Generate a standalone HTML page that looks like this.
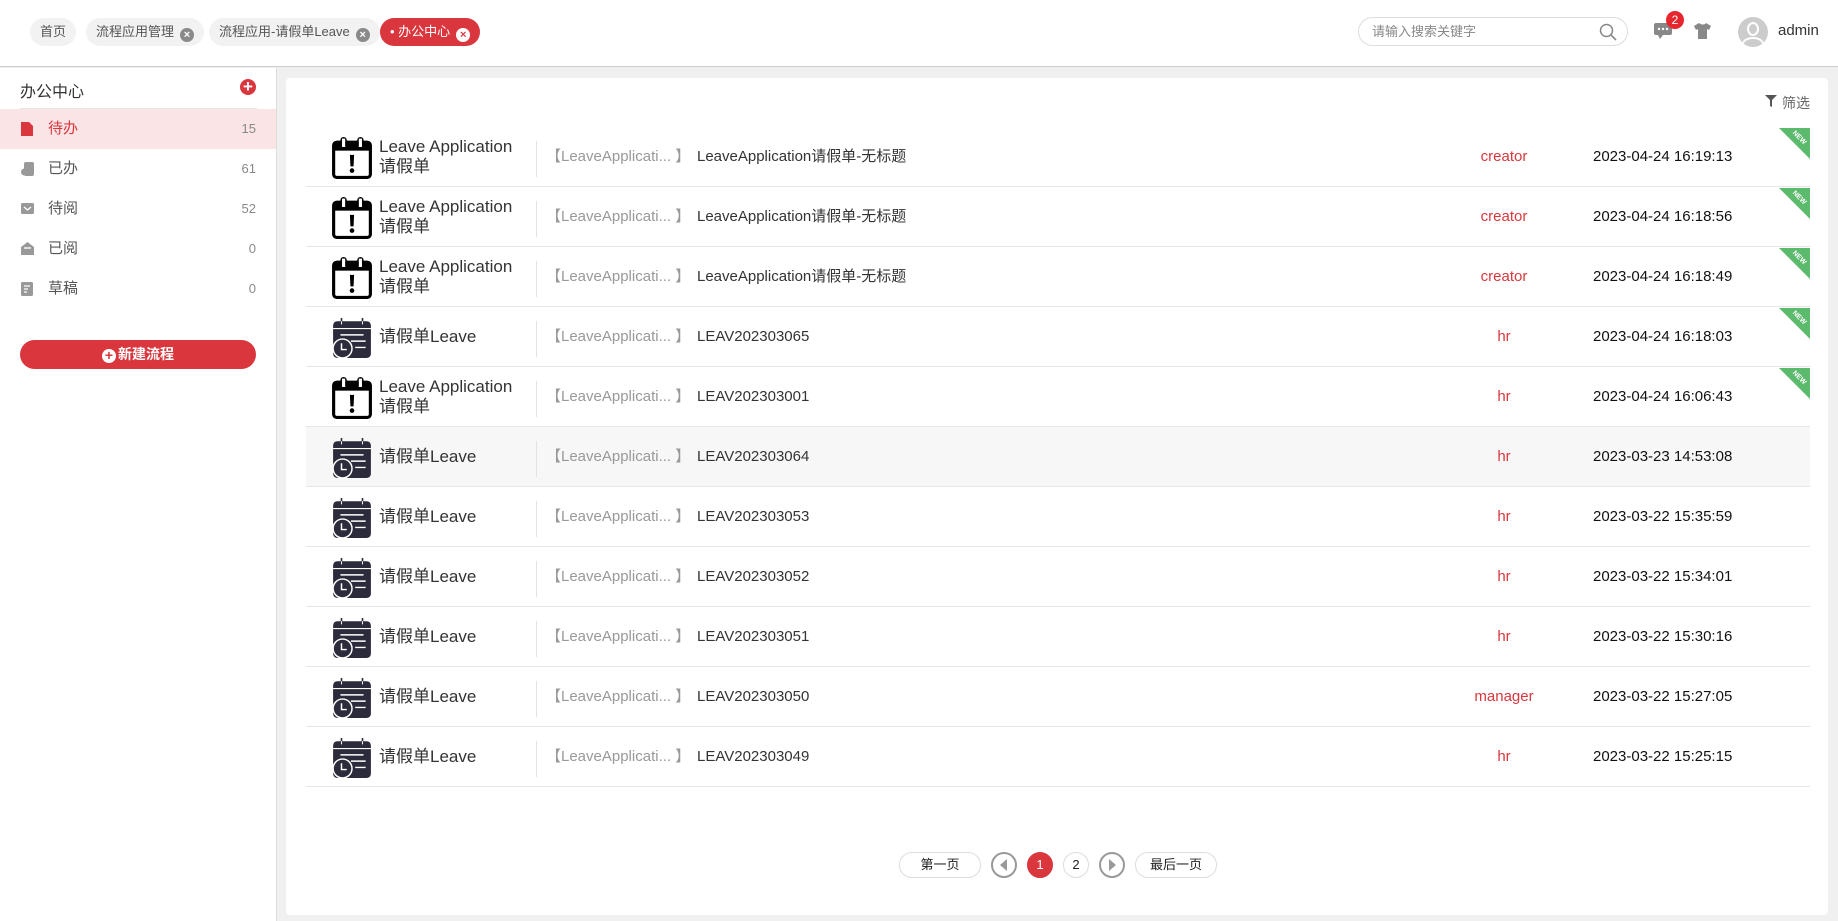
<!DOCTYPE html>
<html><head><meta charset="utf-8"><style>
*{margin:0;padding:0;box-sizing:border-box}
body{width:1838px;height:921px;background:#f0f0f0;font-family:"Liberation Sans","Noto Sans CJK SC",sans-serif;position:relative;overflow:hidden;color:#333}
.a{position:absolute}
#hdr{left:0;top:0;width:1838px;height:67px;background:#fff;border-bottom:1px solid #ccc}
.tab{position:absolute;top:18px;height:28px;border-radius:14px;background:#f2f2f2;font-size:13px;color:#555;line-height:28px;padding:0 10px;white-space:nowrap}
.x{display:inline-block;width:14px;height:14px;border-radius:50%;background:#8a8a8a;color:#fff;font-size:11px;line-height:14px;text-align:center;vertical-align:-2px;margin-left:6px;font-weight:bold}
#side{left:0;top:68px;width:277px;height:853px;background:#fff;border-right:1px solid #ddd}
.it{position:absolute;left:0;width:276px;height:40px;font-size:15px;color:#555;line-height:40px}
.it .t{position:absolute;left:48px}
.it .n{position:absolute;right:20px;font-size:13px;color:#888}
.it svg{position:absolute;left:21px;top:13px}
#card{left:286px;top:78px;width:1542px;height:837px;background:#fff;border-radius:4px}
.row{position:absolute;left:306px;width:1504px;height:60px;border-bottom:1px solid #e6e6e6}
.ic{position:absolute;left:26px;top:10px}
.nm{position:absolute;left:73px;font-size:17px;color:#333;line-height:20px;white-space:nowrap}
.dv{position:absolute;left:230px;top:14px;width:1px;height:36px;background:#e3e3e3}
.br{position:absolute;left:240px;top:20px;font-size:15px;color:#999;line-height:20px;white-space:nowrap}
.ti{position:absolute;left:391px;top:20px;font-size:15px;color:#333;line-height:20px;white-space:nowrap}
.ro{position:absolute;left:1150px;width:96px;text-align:center;top:20px;font-size:15px;color:#d9373d;line-height:20px}
.dt{position:absolute;left:1287px;top:20px;font-size:15px;color:#111;line-height:20px}
.new{position:absolute;right:0;top:1px;width:31px;height:31px}
.pb{position:absolute;top:852px;height:26px;border:1px solid #ddd;border-radius:13px;background:#fff;font-size:13px;line-height:24px;text-align:center;color:#222}
</style></head><body>
<div id="hdr" class="a">
<div class="tab" style="left:30px">首页</div>
<div class="tab" style="left:86px">流程应用管理<span class="x">×</span></div>
<div class="tab" style="left:209px">流程应用-请假单Leave<span class="x">×</span></div>
<div class="tab" style="left:380px;background:#d9373d;color:#fff">• 办公中心<span class="x" style="background:#fff;color:#d9373d">×</span></div>
<div class="a" style="left:1358px;top:17px;width:270px;height:29px;border:1px solid #ddd;border-radius:15px;font-size:13px;color:#888;line-height:27px;padding-left:13px">请输入搜索关键字
<svg class="a" style="right:10px;top:5px" width="18" height="18" viewBox="0 0 18 18"><circle cx="7.5" cy="7.5" r="6" fill="none" stroke="#888" stroke-width="1.5"/><path d="M12 12l5 5" stroke="#888" stroke-width="1.6"/></svg></div>
<svg class="a" style="left:1654px;top:23px" width="18" height="16" viewBox="0 0 18 16"><rect x="0" y="0" width="18" height="12" rx="2" fill="#888"/><path d="M4 12l2 4 3-4z" fill="#888"/><circle cx="5" cy="6" r="1.2" fill="#fff"/><circle cx="9" cy="6" r="1.2" fill="#fff"/><circle cx="13" cy="6" r="1.2" fill="#fff"/></svg>
<div class="a" style="left:1666px;top:11px;width:18px;height:18px;border-radius:50%;background:#e8262e;color:#fff;font-size:12px;line-height:18px;text-align:center">2</div>
<svg class="a" style="left:1694px;top:23px" width="17" height="16" viewBox="0 0 17 16"><path d="M5 0L0 3l2 4 2-1v10h9V6l2 1 2-4-5-3c-1 2-5 2-7 0z" fill="#888"/></svg>
<div class="a" style="left:1738px;top:17px;width:30px;height:30px;border-radius:50%;background:#ccc;overflow:hidden"><div class="a" style="left:9px;top:5px;width:12px;height:14px;border-radius:50%;border:2px solid #fff"></div><div class="a" style="left:4px;top:20px;width:22px;height:14px;border-radius:50%;border:2px solid #fff"></div></div>
<div class="a" style="left:1778px;top:22px;font-size:15px;color:#333">admin</div>
</div>
<div id="side" class="a">
<div class="a" style="left:20px;top:10px;font-size:16px;color:#333">办公中心</div>
<div class="a" style="left:240px;top:11px;width:16px;height:16px;border-radius:50%;background:#d9373d;color:#fff;font-size:17px;line-height:15px;text-align:center;font-weight:bold">+</div>
<div class="a" style="left:20px;top:40px;width:237px;height:1px;background:#e5e5e5"></div>
<div class="it" style="top:41px;background:#fae4e5;color:#d9373d"><svg width="12" height="14"><path d="M0 0h8l4 4v10H0z" fill="#d9373d"/></svg><span class="t">待办</span><span class="n">15</span></div>
<div class="it" style="top:81px"><svg width="13" height="14"><rect x="3" y="0" width="10" height="14" rx="2" fill="#999"/><circle cx="3.5" cy="10" r="3.5" fill="#999"/></svg><span class="t">已办</span><span class="n">61</span></div>
<div class="it" style="top:121px"><svg width="13" height="12" style="top:14px"><rect width="13" height="11" rx="1.5" fill="#999"/><path d="M3 4l3.5 3L10 4" stroke="#fff" fill="none" stroke-width="1.3"/></svg><span class="t">待阅</span><span class="n">52</span></div>
<div class="it" style="top:161px"><svg width="13" height="13"><path d="M0 5l6.5-5L13 5v8H0z" fill="#999"/><path d="M3 6h7" stroke="#fff" stroke-width="1.3"/></svg><span class="t">已阅</span><span class="n">0</span></div>
<div class="it" style="top:201px"><svg width="13" height="14"><rect width="12" height="14" rx="1.5" fill="#999"/><path d="M3 4h6M3 7h4M3 10h3" stroke="#fff" stroke-width="1.3"/></svg><span class="t">草稿</span><span class="n">0</span></div>
<div class="a" style="left:20px;top:272px;width:236px;height:29px;border-radius:15px;background:#d9373d;color:#fff;font-size:14px;line-height:29px;text-align:center;font-weight:bold"><span style="display:inline-block;width:14px;height:14px;border-radius:50%;background:#fff;color:#d9373d;font-size:14px;line-height:13px;vertical-align:-1px;margin-right:2px">+</span>新建流程</div>
</div>
<div id="card" class="a"></div>
<svg class="a" style="left:1765px;top:95px" width="12" height="12" viewBox="0 0 12 12"><path d="M0 0h12L7 5v7L5 11V5z" fill="#555"/></svg>
<div class="a" style="left:1782px;top:93px;font-size:14px;color:#666">筛选</div>

<svg width="0" height="0" style="position:absolute"><defs>
<symbol id="c1" viewBox="0 0 38 40"><rect x="1.5" y="5" width="35" height="33.5" rx="3" fill="#fff" stroke="#000" stroke-width="3"/><rect x="1.5" y="5" width="35" height="8" fill="#000"/><rect x="8" y="0" width="6" height="11" rx="3" fill="#000"/><rect x="9.5" y="1.5" width="3" height="8" fill="#fff"/><rect x="24" y="0" width="6" height="11" rx="3" fill="#000"/><rect x="25.5" y="1.5" width="3" height="8" fill="#fff"/><path d="M17 17h4l-0.5 11h-3z" fill="#000"/><circle cx="19" cy="32" r="2.2" fill="#000"/></symbol>
<symbol id="c2" viewBox="0 0 38 40"><rect x="1" y="4" width="36" height="35" rx="4" fill="#2b2b3b"/><path d="M1 11h36" stroke="#fff" stroke-width="1"/><path d="M9 1v6M29 1v6" stroke="#2b2b3b" stroke-width="1.5"/><path d="M9 4v3M29 4v3" stroke="#fff" stroke-width="1"/><path d="M8 17h22M18 23h14M22 29h10" stroke="#fff" stroke-width="1.4"/><circle cx="10" cy="30" r="9" fill="#2b2b3b" stroke="#fff" stroke-width="1.4"/><path d="M9 25v6h5" stroke="#fff" stroke-width="1.4" fill="none"/></symbol>
<symbol id="nw" viewBox="0 0 31 31"><path d="M0 0h31v31z" fill="#5cba6c"/><text x="19" y="11" font-size="7" fill="#fff" font-weight="bold" font-family="Liberation Sans" transform="rotate(45 19 11)" text-anchor="middle">NEW</text></symbol>
</defs></svg>

<div class="row" style="top:127px"><svg class="ic" width="40" height="42" viewBox="0 0 38 40"><use href="#c1"/></svg><div class="nm" style="top:10px">Leave Application<br>请假单</div><div class="dv"></div><div class="br">【LeaveApplicati... 】</div><div class="ti">LeaveApplication请假单-无标题</div><div class="ro">creator</div><div class="dt">2023-04-24 16:19:13</div><svg class="new"><use href="#nw"/></svg></div>
<div class="row" style="top:187px"><svg class="ic" width="40" height="42" viewBox="0 0 38 40"><use href="#c1"/></svg><div class="nm" style="top:10px">Leave Application<br>请假单</div><div class="dv"></div><div class="br">【LeaveApplicati... 】</div><div class="ti">LeaveApplication请假单-无标题</div><div class="ro">creator</div><div class="dt">2023-04-24 16:18:56</div><svg class="new"><use href="#nw"/></svg></div>
<div class="row" style="top:247px"><svg class="ic" width="40" height="42" viewBox="0 0 38 40"><use href="#c1"/></svg><div class="nm" style="top:10px">Leave Application<br>请假单</div><div class="dv"></div><div class="br">【LeaveApplicati... 】</div><div class="ti">LeaveApplication请假单-无标题</div><div class="ro">creator</div><div class="dt">2023-04-24 16:18:49</div><svg class="new"><use href="#nw"/></svg></div>
<div class="row" style="top:307px"><svg class="ic" width="40" height="42" viewBox="0 0 38 40"><use href="#c2"/></svg><div class="nm" style="top:20px">请假单Leave</div><div class="dv"></div><div class="br">【LeaveApplicati... 】</div><div class="ti">LEAV202303065</div><div class="ro">hr</div><div class="dt">2023-04-24 16:18:03</div><svg class="new"><use href="#nw"/></svg></div>
<div class="row" style="top:367px"><svg class="ic" width="40" height="42" viewBox="0 0 38 40"><use href="#c1"/></svg><div class="nm" style="top:10px">Leave Application<br>请假单</div><div class="dv"></div><div class="br">【LeaveApplicati... 】</div><div class="ti">LEAV202303001</div><div class="ro">hr</div><div class="dt">2023-04-24 16:06:43</div><svg class="new"><use href="#nw"/></svg></div>
<div class="row" style="top:427px;background:#f7f7f7"><svg class="ic" width="40" height="42" viewBox="0 0 38 40"><use href="#c2"/></svg><div class="nm" style="top:20px">请假单Leave</div><div class="dv"></div><div class="br">【LeaveApplicati... 】</div><div class="ti">LEAV202303064</div><div class="ro">hr</div><div class="dt">2023-03-23 14:53:08</div></div>
<div class="row" style="top:487px"><svg class="ic" width="40" height="42" viewBox="0 0 38 40"><use href="#c2"/></svg><div class="nm" style="top:20px">请假单Leave</div><div class="dv"></div><div class="br">【LeaveApplicati... 】</div><div class="ti">LEAV202303053</div><div class="ro">hr</div><div class="dt">2023-03-22 15:35:59</div></div>
<div class="row" style="top:547px"><svg class="ic" width="40" height="42" viewBox="0 0 38 40"><use href="#c2"/></svg><div class="nm" style="top:20px">请假单Leave</div><div class="dv"></div><div class="br">【LeaveApplicati... 】</div><div class="ti">LEAV202303052</div><div class="ro">hr</div><div class="dt">2023-03-22 15:34:01</div></div>
<div class="row" style="top:607px"><svg class="ic" width="40" height="42" viewBox="0 0 38 40"><use href="#c2"/></svg><div class="nm" style="top:20px">请假单Leave</div><div class="dv"></div><div class="br">【LeaveApplicati... 】</div><div class="ti">LEAV202303051</div><div class="ro">hr</div><div class="dt">2023-03-22 15:30:16</div></div>
<div class="row" style="top:667px"><svg class="ic" width="40" height="42" viewBox="0 0 38 40"><use href="#c2"/></svg><div class="nm" style="top:20px">请假单Leave</div><div class="dv"></div><div class="br">【LeaveApplicati... 】</div><div class="ti">LEAV202303050</div><div class="ro">manager</div><div class="dt">2023-03-22 15:27:05</div></div>
<div class="row" style="top:727px"><svg class="ic" width="40" height="42" viewBox="0 0 38 40"><use href="#c2"/></svg><div class="nm" style="top:20px">请假单Leave</div><div class="dv"></div><div class="br">【LeaveApplicati... 】</div><div class="ti">LEAV202303049</div><div class="ro">hr</div><div class="dt">2023-03-22 15:25:15</div></div>

<div class="pb" style="left:899px;width:82px">第一页</div>
<div class="pb" style="left:991px;width:26px;border:2px solid #999"><svg width="22" height="22" style="position:absolute;left:0;top:0"><path d="M14 5v12L7 11z" fill="#999"/></svg></div>
<div class="pb" style="left:1027px;width:26px;background:#d9373d;border-color:#d9373d;color:#fff">1</div>
<div class="pb" style="left:1063px;width:26px">2</div>
<div class="pb" style="left:1099px;width:26px;border:2px solid #999"><svg width="22" height="22" style="position:absolute;left:0;top:0"><path d="M8 5v12l7-6z" fill="#999"/></svg></div>
<div class="pb" style="left:1135px;width:82px">最后一页</div>
</body></html>
